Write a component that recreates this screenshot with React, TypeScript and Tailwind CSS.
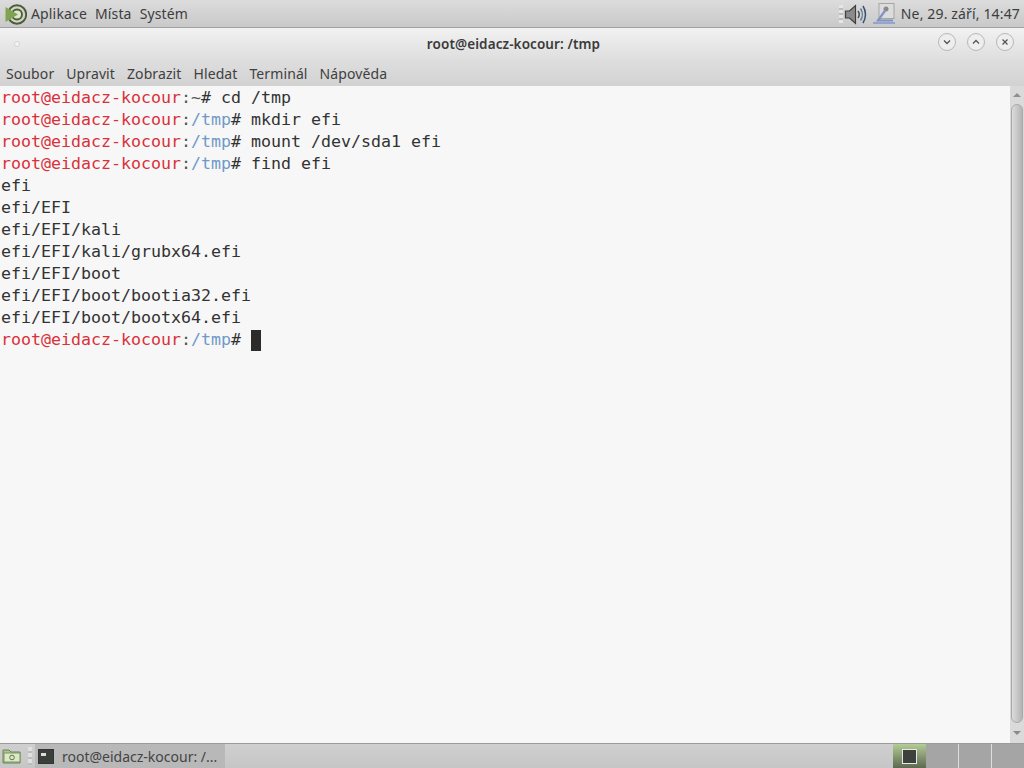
const mono = "font-['DejaVu_Sans_Mono',monospace] text-[16.62px] leading-[22px] whitespace-pre";

function Prompt({ path, cmd }: { path: string; cmd: string }) {
  return (
    <div>
      <span className="text-[#d9303a]">root@eidacz-kocour</span>
      <span className="text-[#555]">:</span>
      <span className={path === "~" ? "text-[#555]" : "text-[#6f9ac8]"}>{path}</span>
      <span className="text-[#333]"># {cmd}</span>
    </div>
  );
}

function MintLogo() {
  return (
    <svg width="24" height="24" viewBox="0 0 24 24">
      <circle cx="14" cy="12.5" r="9.200" fill="#cfd8bf" stroke="#4c5a40" strokeWidth="1.900" />
      <circle cx="14" cy="12.5" r="5" fill="#dfe6d2" stroke="#4f5d3a" strokeWidth="1.900" />
      <path d="M2.500 5 L15 12.5 L2.500 20 Z" fill="#7fa352" />
    </svg>
  );
}

function Speaker() {
  return (
    <svg width="24" height="24" viewBox="0 0 24 24" fill="none">
      <path d="M1.500 9h4l6-5.500v18l-6-5.500h-4z" fill="#8b8b8b" stroke="#3f3f3f" strokeWidth="1.200" />
      <path d="M14 9c1.400 2 1.400 5 0 7" stroke="#4f4f4f" strokeWidth="1.500" />
      <path d="M16.500 6.500c2.400 3.500 2.400 8.500 0 12" stroke="#5f7da8" strokeWidth="1.500" />
      <path d="M19 4c3.300 5 3.300 12 0 17" stroke="#39506f" strokeWidth="1.500" />
    </svg>
  );
}

function NetIcon() {
  return (
    <svg width="24" height="24" viewBox="0 0 24 24" fill="none">
      <rect x="7" y="1.500" width="15" height="15" fill="#dcdcdc" stroke="#a5a5a5" />
      <circle cx="14" cy="7" r="2.500" fill="#8a8a8a" />
      <path d="M13.500 8 L6 18.500 H21" stroke="#7f93c4" strokeWidth="2.200" />
      <path d="M1 21 H23" stroke="#8ea0cc" strokeWidth="1.800" />
    </svg>
  );
}

function WinButton({ children }: { children: React.ReactNode }) {
  return (
    <div className="w-[18px] h-[18px] rounded-full border border-[#b8b8b8] bg-[#eeeeee] flex items-center justify-center">
      <svg width="10" height="10" viewBox="0 0 10 10" fill="none" stroke="#555" strokeWidth="1.300">
        {children}
      </svg>
    </div>
  );
}

export default function App() {
  return (
    <div className="w-[1024px] h-[768px] overflow-hidden flex flex-col bg-[#f5f5f5] font-['Noto_Sans',sans-serif]">
      {/* top panel */}
      <div className="h-[28px] shrink-0 flex items-center bg-gradient-to-b from-[#dcdcdc] to-[#c9c9c9] border-b border-[#a0a0a0] text-[14px] tracking-[0.15px] text-[#3d3d3d]">
        <div className="ml-[3px]">
          <MintLogo />
        </div>
        <div className="ml-[4px] flex gap-[8px]">
          <span>Aplikace</span>
          <span>Místa</span>
          <span>Systém</span>
        </div>
        <div className="ml-auto flex items-center">
          <div className="mr-[1px] w-[4px] h-[18px] bg-[repeating-linear-gradient(to_bottom,#e6e6e6_0,#e6e6e6_3px,#bdbdbd_3px,#bdbdbd_5px)]" />
          <Speaker />
          <div className="ml-[4px]">
            <NetIcon />
          </div>
          <span className="ml-[5px] mr-[4px]">Ne, 29. září, 14:47</span>
        </div>
      </div>

      {/* title bar */}
      <div className="h-[32px] shrink-0 flex items-center relative bg-gradient-to-b from-[#f2f2f2] to-[#dedede]">
        <div className="ml-[14px] w-[6px] h-[6px] rounded-full bg-[#f4f4f4] border border-[#d5d5d5]" />
        <span className="absolute left-0 right-0 pl-[3px] text-center text-[13.5px] tracking-[0.1px] font-semibold text-[#3a3a3a]">root@eidacz-kocour: /tmp</span>
        <div className="ml-auto mr-[10px] flex gap-[11px] relative -top-[2px]">
          <WinButton><path d="M2 3.500 L5 6.500 L8 3.500" /></WinButton>
          <WinButton><path d="M2 6.500 L5 3.500 L8 6.500" /></WinButton>
          <WinButton><path d="M2.500 2.500 L7.500 7.500 M7.500 2.500 L2.500 7.500" /></WinButton>
        </div>
      </div>

      {/* menu bar */}
      <div className="h-[26px] shrink-0 flex items-center pl-[6px] gap-[12px] bg-gradient-to-b from-[#dedede] to-[#d2d2d2] text-[14px] tracking-[0.1px] text-[#404040]">
        <span>Soubor</span>
        <span>Upravit</span>
        <span>Zobrazit</span>
        <span>Hledat</span>
        <span>Terminál</span>
        <span>Nápověda</span>
      </div>

      {/* terminal */}
      <div className="flex-1 flex min-h-0">
        <div className={`flex-1 bg-[#f7f7f7] pl-[1px] pt-[1px] text-[#333] ${mono}`}>
          <Prompt path="~" cmd="cd /tmp" />
          <Prompt path="/tmp" cmd="mkdir efi" />
          <Prompt path="/tmp" cmd="mount /dev/sda1 efi" />
          <Prompt path="/tmp" cmd="find efi" />
          <div>efi</div>
          <div>efi/EFI</div>
          <div>efi/EFI/kali</div>
          <div>efi/EFI/kali/grubx64.efi</div>
          <div>efi/EFI/boot</div>
          <div>efi/EFI/boot/bootia32.efi</div>
          <div>efi/EFI/boot/bootx64.efi</div>
          <div className="flex items-center">
            <Prompt path="/tmp" cmd="" />
            <span className="w-[10px] h-[21px] bg-[#2b2b2b]" />
          </div>
        </div>
        <div className="w-[14px] shrink-0 bg-[#dadada] flex flex-col items-center">
          <div className="mt-[7px] w-0 h-0 border-x-[4px] border-x-transparent border-b-[4px] border-b-[#8f8f8f]" />
          <div className="mt-[7px] w-[12px] h-[619px] rounded-full border border-[#a9a9a9] bg-gradient-to-r from-[#dcdcdc] to-[#b4b4b4]" />
          <div className="mt-[8px] w-0 h-0 border-x-[4px] border-x-transparent border-t-[4px] border-t-[#8a8a8a]" />
        </div>
      </div>

      {/* bottom panel */}
      <div className="h-[25px] shrink-0 flex items-stretch bg-gradient-to-b from-[#cfcfcf] to-[#c6c6c6] border-t border-[#9c9c9c] text-[14px] text-[#444]">
        <div className="w-[24px] flex items-center justify-center">
          <svg width="20" height="18" viewBox="0 0 20 18">
            <path d="M1 3h6l2 2h9v11H1z" fill="#a9c48a" stroke="#6a8450" />
            <rect x="2" y="6" width="16" height="9" fill="#dce8c8" stroke="#7d9660" />
            <circle cx="10" cy="10.500" r="2.300" fill="none" stroke="#5d7545" />
          </svg>
        </div>
        <div className="w-[11px] flex items-center pl-[4px]">
          <div className="w-[4px] h-[18px] bg-[repeating-linear-gradient(to_bottom,#e0e0e0_0,#e0e0e0_4px,#bdbdbd_4px,#bdbdbd_6px)]" />
        </div>
        <div className="w-[190px] flex items-center bg-[#b8b8b8]">
          <div className="ml-[3px] w-[16px] h-[15px] border border-[#333] bg-[#3a3f3a] flex items-start">
            <span className="ml-[2px] mt-[3px] w-[5px] h-[3px] bg-[#ddd]" />
          </div>
          <span className="ml-[8px] whitespace-nowrap">root@eidacz-kocour: /...</span>
        </div>
        <div className="ml-auto flex">
          <div className="w-[33px] flex items-center justify-center bg-gradient-to-b from-[#b4cd96] to-[#5e6a50]">
            <div className="w-[15px] h-[15px] border border-[#e8e8e8] bg-[#3e423d]" />
          </div>
          <div className="w-[33px] bg-[#a5a5a5] border-r border-[#dedede]" />
          <div className="w-[33px] bg-[#a5a5a5] border-r border-[#dedede]" />
          <div className="w-[32px] bg-[#a5a5a5]" />
        </div>
      </div>
    </div>
  );
}
